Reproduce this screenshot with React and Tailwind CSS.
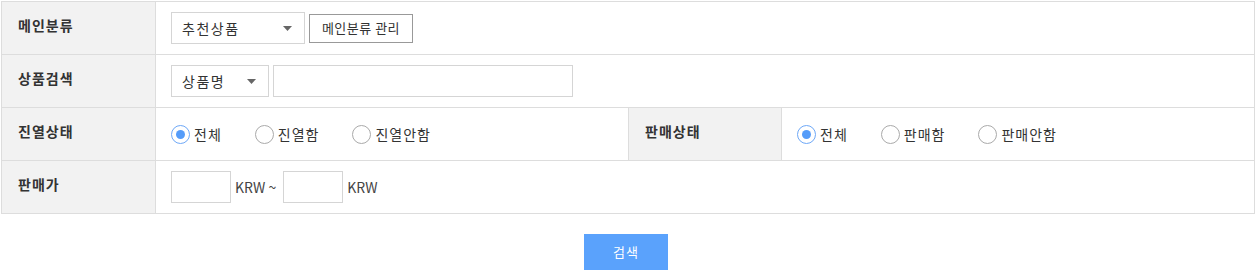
import React, { useState } from 'react';

const font = { fontFamily: '"Noto Sans CJK KR", "Noto Sans", sans-serif' };

const Caret = () => (
  <svg width="9" height="5" viewBox="0 0 9 5" className="shrink-0">
    <path d="M0 0h9L4.5 5z" fill="#666" />
  </svg>
);

const Select = ({ value, width }) => (
  <div className={`flex items-center justify-between h-[32px] border border-[#d5d5d5] bg-white pl-[10px] pr-[12px] ${width}`}>
    <span className="text-[14px] tracking-[1.5px] text-[#333]">{value}</span>
    <Caret />
  </div>
);

const Radio = ({ label, checked, onClick }) => (
  <label onClick={onClick} className="flex items-center gap-[4px] mr-[33px] cursor-pointer">
    <span
      className={`flex items-center justify-center w-[19px] h-[19px] rounded-full border bg-white ${
        checked ? 'border-[#6ea8f7]' : 'border-[#aaa]'
      }`}
    >
      {checked && <span className="w-[9px] h-[9px] rounded-full bg-[#559cf9]" />}
    </span>
    <span className="text-[14px] tracking-[1px] text-[#333]">{label}</span>
  </label>
);

const Label = ({ children, border }) => (
  <div className={`w-[154px] shrink-0 bg-[#f2f2f2] border-r border-[#ddd] pl-[16px] pt-[13px] text-[14px] tracking-[1px] font-bold text-[#333] ${border || ''}`}>
    {children}
  </div>
);

const App = () => {
  const [display, setDisplay] = useState('전체');
  const [sale, setSale] = useState('전체');

  return (
    <div className="pt-px pl-px bg-white" style={font}>
      <div className="w-[1254px] border border-[#ddd]">
        {/* 메인분류 */}
        <div className="flex h-[53px] border-b border-[#ddd]">
          <Label>메인분류</Label>
          <div className="flex items-center gap-[4px] pl-[15px]">
            <Select value="추천상품" width="w-[134px]" />
            <button className="w-[104px] h-[29px] border border-[#999] bg-white text-[13px] tracking-[0.5px] text-[#333]">
              메인분류 관리
            </button>
          </div>
        </div>

        {/* 상품검색 */}
        <div className="flex h-[53px] border-b border-[#ddd]">
          <Label>상품검색</Label>
          <div className="flex items-center gap-[4px] pl-[15px]">
            <Select value="상품명" width="w-[98px]" />
            <input className="w-[300px] h-[32px] border border-[#d5d5d5] outline-none" />
          </div>
        </div>

        {/* 진열상태 / 판매상태 */}
        <div className="flex h-[53px] border-b border-[#ddd]">
          <Label>진열상태</Label>
          <div className="w-[472px] flex items-center pl-[15px]">
            {['전체', '진열함', '진열안함'].map((v) => (
              <Radio key={v} label={v} checked={display === v} onClick={() => setDisplay(v)} />
            ))}
          </div>
          <Label border="border-l">판매상태</Label>
          <div className="flex-1 flex items-center pl-[15px]">
            {['전체', '판매함', '판매안함'].map((v) => (
              <Radio key={v} label={v} checked={sale === v} onClick={() => setSale(v)} />
            ))}
          </div>
        </div>

        {/* 판매가 */}
        <div className="flex h-[52px]">
          <Label>판매가</Label>
          <div className="flex items-center pl-[15px] text-[14px] text-[#444]">
            <input className="w-[60px] h-[32px] border border-[#d5d5d5] outline-none" />
            <span className="ml-[4px] mr-[7px]">KRW ~</span>
            <input className="w-[60px] h-[32px] border border-[#d5d5d5] outline-none" />
            <span className="ml-[4px]">KRW</span>
          </div>
        </div>
      </div>

      <div className="w-[1250px] flex justify-center mt-[20px]">
        <button className="w-[84px] h-[36px] bg-[#5aa2fc] text-white text-[13px] tracking-[1px]">검색</button>
      </div>
    </div>
  );
};

export default App;
